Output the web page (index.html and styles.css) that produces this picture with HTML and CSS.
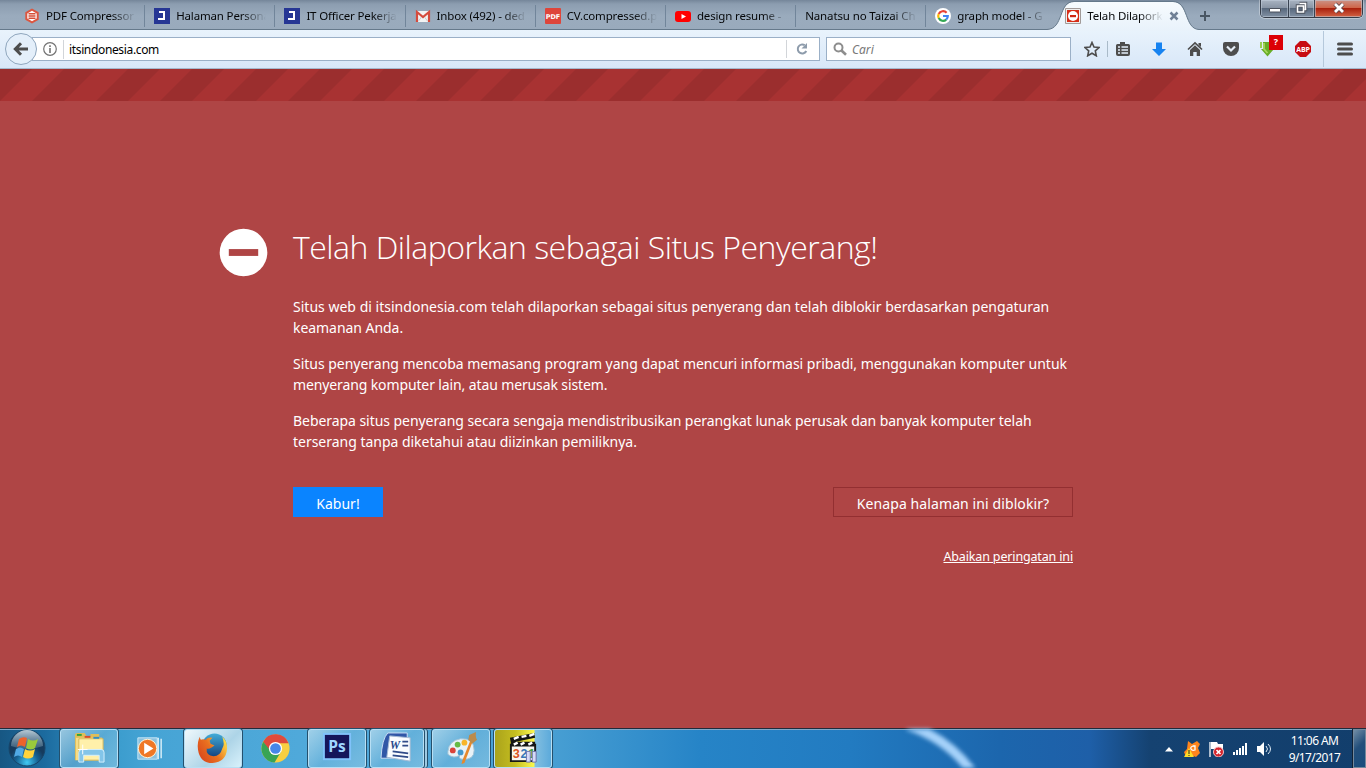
FILE: index.html
```html
<!DOCTYPE html>
<html lang="id">
<head>
<meta charset="utf-8">
<title>Telah Dilaporkan sebagai Situs Penyerang!</title>
<link rel="stylesheet" href="styles.css">
</head>
<body>
<div class="screen">
  <header class="tabstrip">
    <div class="tab"><svg class="fav" viewBox="0 0 16 16"><path d="M8 .5l6.700 3.700v7.600L8 15.500 1.300 11.800V4.200z" fill="#db5640"/><path d="M8 2.800l4.700 2.600v5.200L8 13.200l-4.700-2.600V5.400z" fill="#fff"/><path d="M4.500 5.700h7M4.500 8h7M4.500 10.300h7" stroke="#d64c35" stroke-width="1.500"/></svg><span class="label">PDF Compressor</span></div>
    <div class="tab"><svg class="fav" viewBox="0 0 16 16"><path d="M0 0h16v16H0z" fill="#263694"/><path d="M5 4h5v7H4" fill="none" stroke="#fff" stroke-width="2"/></svg><span class="label">Halaman Persona</span></div>
    <div class="tab"><svg class="fav" viewBox="0 0 16 16"><path d="M0 0h16v16H0z" fill="#263694"/><path d="M5 4h5v7H4" fill="none" stroke="#fff" stroke-width="2"/></svg><span class="label">IT Officer Pekerja</span></div>
    <div class="tab"><svg class="fav" viewBox="0 0 16 16"><path d="M1 3h14v11H1z" fill="#f3f3f3"/><path d="M2 14V4l6 5 6-5v10" fill="none" stroke="#d54b3d" stroke-width="2.200"/><path d="M3.500 13l3-4M12.500 13l-3-4" stroke="#ccc"/></svg><span class="label">Inbox (492) - ded</span></div>
    <div class="tab"><svg class="fav" viewBox="0 0 16 16"><rect width="16" height="16" rx="1" fill="#de453a"/><text x="8" y="10.700" class="pdf" text-anchor="middle">PDF</text></svg><span class="label">CV.compressed.p</span></div>
    <div class="tab"><svg class="fav" viewBox="0 0 16 16"><rect y="3" width="16" height="11" rx="3" fill="#f00"/><path d="M6.500 6v5L11 8.500z" fill="#fff"/></svg><span class="label">design resume - </span></div>
    <div class="tab noicon"><span class="label">Nanatsu no Taizai Ch</span></div>
    <div class="tab last"><svg class="fav" viewBox="0 0 16 16"><circle cx="8" cy="8" r="8" fill="#fff"/><g fill="none" stroke-width="2.200"><path d="M11.600 4.800A4.800 4.800 0 0 0 3.700 5.900" stroke="#ea4335"/><path d="M3.700 5.900a4.800 4.800 0 0 0 0 4.200" stroke="#fbbc05"/><path d="M3.700 10.100a4.800 4.800 0 0 0 7.500 1.500" stroke="#34a853"/><path d="M11.200 11.600A4.800 4.800 0 0 0 12.800 8H8" stroke="#4285f4"/></g></svg><span class="label">graph model - G</span></div>
    <div class="active">
      <svg class="shape" viewBox="0 0 152 31"><defs><linearGradient id="tabg" x2="0" y2="1"><stop stop-color="#f7fbfe"/><stop offset="1" stop-color="#e8f2fb"/></linearGradient></defs><path d="M0 29.500C17 29 11 2 27 2H126C142 2 137 29 152 29.500V31H0z" fill="url(#tabg)"/><path d="M0 29.500C17 29 11 1.500 27 1.500H126C142 1.500 137 29 152 29.500" fill="none" stroke="#65798b"/></svg>
      <svg class="fav" viewBox="0 0 16 16"><path d="M.5.5h15v15H.5z" fill="#eee" stroke="#a29b99"/><path d="M2 2h12v12H2z" fill="#d62d17"/><circle cx="8" cy="8" r="5" fill="#fff"/><path d="M5 7h6v2.200H5z" fill="#ce2712"/></svg><span class="label">Telah Dilapork</span>
      <svg class="close" viewBox="0 0 10 10"><path d="M1.500 1.500l7 7M8.500 1.500l-7 7" stroke="#718196" stroke-width="2.500"/></svg>
    </div>
    <svg class="plus" viewBox="0 0 12 12"><path d="M6 1v10M1 6h10" stroke="#495663" stroke-width="2"/></svg>
    <div class="controls">
      <span class="ctl"><svg viewBox="0 0 28 17"><rect x="8.500" y="8.500" width="11" height="3.500" rx=".5" fill="#fff" stroke="#4b515c"/></svg></span>
      <span class="ctl mid"><svg viewBox="0 0 26 17"><path d="M10.500 3.500h6v6h-1M8.500 6h6v6h-6z" fill="none" stroke="#4b515c" stroke-width="3.500"/><path d="M10.500 3.500h6v6h-1M8.500 6h6v6h-6z" fill="none" stroke="#fff" stroke-width="1.600"/></svg></span>
      <span class="ctl red"><svg viewBox="0 0 47 17"><path d="M20 4l8 8M28 4l-8 8" stroke="#59454a" stroke-width="4.500"/><path d="M20 4l8 8M28 4l-8 8" stroke="#fff" stroke-width="2.800"/></svg></span>
    </div>
  </header>

  <nav class="toolbar">
    <span class="back"><svg viewBox="0 0 16 16"><path d="M15 8H3M8 2.200L2.300 8 8 13.800" fill="none" stroke="#4d4d4d" stroke-width="3"/></svg></span>
    <div class="url">
      <svg class="info" viewBox="0 0 14 14"><circle cx="7" cy="7" r="6.300" fill="none" stroke="#737373" stroke-width="1.200"/><path d="M7 6v5M7 3.200v1.700" stroke="#737373" stroke-width="1.600"/></svg>
      <span class="address">itsindonesia.com</span>
      <span class="reload"><svg viewBox="0 0 14 14"><path d="M9.700 3.200A4.500 4.500 0 1 0 11.300 9" fill="none" stroke="#8d9bab" stroke-width="2"/><path d="M12 1v5.500H6.500z" fill="#8d9bab"/></svg></span>
    </div>
    <div class="search"><svg viewBox="0 0 14 14"><circle cx="5.500" cy="5.500" r="4" fill="none" stroke="#8d8d8d" stroke-width="2"/><path d="M8.500 8.500l4.500 4.200" stroke="#8d8d8d" stroke-width="2.600"/></svg><span>Cari</span></div>
    <div class="tools">
      <svg viewBox="0 0 16 16"><path d="M8 1.500l2 4.500 5 .5-3.700 3.400 1 4.900L8 12.300l-4.300 2.500 1-4.900L1 6.500 6 6z" fill="none" stroke="#4d4d4d" stroke-width="1.600"/></svg>
      <svg class="list" viewBox="0 0 16 16"><path d="M5 3V1h5v2h3.500a1.500 1.500 0 0 1 1.500 1.500v8.500a2 2 0 0 1-2 2H3a2 2 0 0 1-2-2V4.500A1.500 1.500 0 0 1 2.500 3z" fill="#4d4d4d"/><path d="M3 6h2M6.500 6H13M3 9h2M6.500 9H13M3 12h2M6.500 12H13" stroke="#e4eefa" stroke-width="1.300"/></svg>
      <svg viewBox="0 0 16 16"><path d="M5 1.500h6V8h4L8 15 1 8h4z" fill="#1783f0"/></svg>
      <svg viewBox="0 0 16 16"><path d="M1 8.500l7-6.500 7 6.500" fill="none" stroke="#4d4d4d" stroke-width="1.700"/><path d="M11.500 2H14v4l-2.500-2zM3 9l5-4.700L13 9v6H9.700v-4H6.300v4H3z" fill="#4d4d4d"/></svg>
      <svg viewBox="0 0 16 16"><path d="M2 1h12a2 2 0 0 1 2 2v4A8 8 0 0 1 0 7V3a2 2 0 0 1 2-2z" fill="#4d4d4d"/><path d="M4 5.500l4 4 4-4" fill="none" stroke="#e5eef8" stroke-width="2.200"/></svg>
      <span class="fetch"><svg viewBox="0 0 16 16"><path d="M4 1h8v7h3l-6.500 7.500L2 8h2z" fill="#69ad27"/><path d="M1 1h2v6H1z" fill="#99cf52"/><path d="M5 2v6l3.500 4" stroke="#a8d85d" stroke-width="1.800" fill="none"/></svg><b>?</b></span>
      <svg viewBox="0 0 16 16"><path d="M5 0h6l5 5v6l-5 5H5l-5-5V5z" fill="#c70d12"/><text x="8" y="10.700" class="abp" text-anchor="middle">ABP</text></svg>
    </div>
    <span class="menu"><svg viewBox="0 0 16 14"><path d="M1.500 2h13M1.500 7h13M1.500 12h13" stroke="#4d4d4d" stroke-width="3" stroke-linecap="round"/></svg></span>
  </nav>

  <svg class="stripes" width="1366" height="32"><defs><pattern id="stripe" width="64" height="32" patternUnits="userSpaceOnUse"><path d="M0 0h64v32H0z" fill="#a83232"/><path d="M0 0h32L0 32zM64 0v32H32z" fill="#9b2e2e"/></pattern></defs><rect width="1366" height="32" fill="url(#stripe)"/></svg>

  <main class="warning">
    <svg class="stop" viewBox="0 0 50 50"><circle cx="25" cy="25" r="24.300" fill="#fff"/><path d="M10 21.500h30v7H10z" fill="#af4545"/></svg>
    <section class="content">
      <h1>Telah Dilaporkan sebagai Situs Penyerang!</h1>
      <p><span class="p1">Situs web di itsindonesia.com telah dilaporkan sebagai situs penyerang dan telah diblokir berdasarkan pengaturan</span><br><span class="p2">keamanan Anda.</span></p>
      <p><span class="p3">Situs penyerang mencoba memasang program yang dapat mencuri informasi pribadi, menggunakan komputer untuk</span><br><span class="p4">menyerang komputer lain, atau merusak sistem.</span></p>
      <p><span class="p5">Beberapa situs penyerang secara sengaja mendistribusikan perangkat lunak perusak dan banyak komputer telah</span><br><span class="p6">terserang tanpa diketahui atau diizinkan pemiliknya.</span></p>
      <div class="actions"><button class="leave">Kabur!</button><button class="why">Kenapa halaman ini diblokir?</button></div>
      <div class="ignore"><a>Abaikan peringatan ini</a></div>
    </section>
  </main>

  <footer class="taskbar">
    <svg class="streak" viewBox="0 0 110 40"><path d="M0-4Q42 10 67 45" fill="none" stroke="#a6d2fa" stroke-width="10"/></svg>
    <svg class="start" viewBox="0 0 40 40"><defs><radialGradient id="orb" cy=".9"><stop stop-color="#41caf4"/><stop offset=".6" stop-color="#176496"/><stop offset="1" stop-color="#163b5d"/></radialGradient><linearGradient id="shine" x2="0" y2="1"><stop stop-color="#d4e2e9" stop-opacity=".85"/><stop offset="1" stop-color="#8aaabc" stop-opacity=".3"/></linearGradient></defs><circle cx="20" cy="20" r="18" fill="url(#orb)" stroke="#174569"/><path d="M4 18a16 16 0 0 1 32 0q-16 6-32 0z" fill="url(#shine)"/><path d="M12 11q4-3 8-1l-2 9q-4-3-8 0z" fill="#ee622b"/><path d="M21 11q5 3 10 0l-3 9q-4 3-9 0z" fill="#9aca3c"/><path d="M9 21q4-3 8 0l-2 8q-4-3-8 0z" fill="#51a9e5"/><path d="M18 21q5 3 10 0l-2 8q-5 3-10 0z" fill="#ffd33c"/></svg>
    <div class="apps">
      <span class="app open"><svg viewBox="0 0 36 34"><path d="M3 3q0-2 2-2h8l2 3h4V2h9v4h3v23H3z" fill="#dfbd58"/><path d="M4 6h27v23H4z" fill="#f6dc86"/><path d="M7 7h25v22H7z" fill="#fff0aa" stroke="#d6b75b"/><path d="M5 2h5v2H5z" fill="#30a335"/><path d="M13 4h6v2h-6z" fill="#d84b2d"/><path d="M22 5h6v2h-6z" fill="#328dc5"/><path d="M7 31V21q0-3 3-3h20q3 0 3 3v10h-5v-7H12v7z" fill="#83c5e9" stroke="#d5f0fd"/><path d="M11 13v10M6 18h10" stroke="#fff"/></svg></span>
      <span class="app player"><svg viewBox="0 0 36 34"><path d="M6 6h20v22H6z" fill="#8bc1df" stroke="#c7e7f8"/><path d="M27 6v22M30 7v20" fill="none" stroke="#d8eef8" stroke-width="1.500"/><circle cx="16" cy="17" r="9.500" fill="#ef7725" stroke="#fff5d9"/><path d="M12.500 11v12l9.500-6z" fill="#fff"/></svg></span>
      <span class="app open bright"><svg viewBox="0 0 36 34"><defs><linearGradient id="fox" x1="0" x2="1" y1=".8" y2=".2"><stop stop-color="#d8431b"/><stop offset=".5" stop-color="#e97120"/><stop offset="1" stop-color="#ffe24a"/></linearGradient><linearGradient id="globe" x2="0" y2="1"><stop stop-color="#43acd8"/><stop offset="1" stop-color="#123f7d"/></linearGradient></defs><circle cx="19" cy="14" r="12.500" fill="url(#globe)"/><path d="M4 5Q1 10 2 18q2 14 15 14 14-1 15-15 0-8-5-12 3 8 0 12-2 8-9 8-8-1-7-8 2 1 5-1l3-2-4-2-1-3 3-3q-5-1-7 2-3-1-5 0-1-1-1-3z" fill="url(#fox)"/></svg></span>
      <span class="app"><svg viewBox="0 0 36 34"><circle cx="18" cy="17" r="14.500" fill="#f8cf42"/><path d="M5.300 10A14.500 14.500 0 0 1 31.500 11.500H18L12 20z" fill="#de4a3d"/><path d="M5.300 10A14.500 14.500 0 0 0 17 31.500l6.500-11-10-.5z" fill="#38a455"/><circle cx="18" cy="17" r="6.800" fill="#fff"/><circle cx="18" cy="17" r="5.500" fill="#4687e9"/></svg></span>
      <span class="app open"><svg viewBox="0 0 36 34"><path d="M3 1h29v28H3z" fill="#80c2fa"/><path d="M5 3h25v24H5z" fill="#15165b"/><text x="17.500" y="20.500" class="ps" text-anchor="middle">Ps</text></svg></span>
      <span class="app open stack"><svg viewBox="0 0 36 34"><path d="M8 1h20v26H1Q2 7 8 1z" fill="#3057a7" stroke="#cbe0f5"/><path d="M10 4l21 2v24L7 26z" fill="#f9fcff" stroke="#a7bcd4"/><text x="10" y="18" class="word">W</text><path d="M23 10h6M23 14h6M13 20l16 2M13 24l16 2" stroke="#304b89" stroke-width="1.800"/></svg></span>
      <span class="app open"><svg viewBox="0 0 36 34"><path d="M4 20Q5 9 17 7q14-1 14 12 0 10-12 9-4 0-3-4-6 4-12-1z" fill="#e8f2f7" stroke="#a3c3d6"/><circle cx="9" cy="19" r="3" fill="#da433b"/><circle cx="14" cy="13" r="3" fill="#66ba45"/><circle cx="21" cy="11" r="3" fill="#f8b529"/><circle cx="17" cy="21" r="3" fill="#4399cd"/><path d="M27 9l2 2-8 21-3 1 1-4z" fill="#e7892c"/><path d="M26 3l7-3q-1 5 1 8l-5 4-4-4z" fill="#bb8b4c"/></svg></span>
      <span class="app open yellow"><svg viewBox="0 0 36 34"><path d="M5 13h25v17H5z" fill="#f6f6f0" stroke="#171915" stroke-width="2"/><path d="M4 6L29 1l1 5L5 11zM5 10h25v5H5z" fill="#141615"/><path d="M8 7l5-2M16 5l5-1M24 4l5-2M8 13l4-2M15 13l4-2M23 13l4-2" stroke="#fff" stroke-width="2.500"/><text x="7" y="27" class="mpc" fill="#da5422">3</text><text x="15" y="27" class="mpc" fill="#3778b9">2</text><text x="23" y="27" class="mpc" fill="#42a143">1</text><path d="M21 20h4v11h-4zM27 20h4v11h-4z" fill="#d5daf7" stroke="#6c73ad"/></svg></span>
    </div>
    <div class="tray">
      <svg class="up" viewBox="0 0 10 8"><path d="M1 6.500h8L5 2z" fill="#fff"/></svg>
      <svg viewBox="0 0 16 16"><path d="M4 0l4 3 5-3 3 3-2 4 2 5-4 4-5-2-5 2-2-5 3-3z" fill="#ff851c"/><path d="M9 5q-3 1-2 3t4 1V5z" fill="none" stroke="#fff" stroke-width="1.300"/><path d="M5 7l5 9H0z" fill="#fddd28"/><path d="M5 9v4M5 14v1" stroke="#222"/></svg>
      <svg viewBox="0 0 16 16"><path d="M2 1v15" stroke="#fff" stroke-width="1.300"/><path d="M3 1h6l1 2h5v7H9L8 8H3z" fill="#fff"/><circle cx="10.500" cy="11" r="5" fill="#d6242c" stroke="#f5c4c7"/><path d="M8.500 9l4 4M12.500 9l-4 4" stroke="#fff" stroke-width="1.700"/></svg>
      <svg viewBox="0 0 16 16"><path d="M2 11v3M5 9v5M8 7v7M11 5v9M14 2v12" stroke="#fff" stroke-width="2"/></svg>
      <svg viewBox="0 0 16 16"><path d="M1 5h3l4-4v14l-4-4H1z" fill="#fff"/><path d="M10 5q3 3 0 6M12 3q5 5 0 10" fill="none" stroke="#e1edf7"/></svg>
    </div>
    <div class="clock"><span>11:06 AM</span><span>9/17/2017</span></div>
    <div class="desktop"></div>
  </footer>
</div>
</body>
</html>
```

FILE: styles.css
```css
* { box-sizing: border-box; }
body { margin: 0; overflow: hidden; font-family: "Noto Sans", "Open Sans", sans-serif; }
svg { display: block; flex: none; }
.screen { width: 1366px; height: 768px; display: flex; flex-direction: column; }
.tabstrip { height: 30px; padding-left: 15px; display: flex; position: relative; background: linear-gradient(#75869a, #8c9db0 4px, #9aabbd 16px, #99aabc); border-bottom: 1px solid #65798b; font-size: 11.5px; }
.tab { width: 130.200px; height: 29px; padding: 2px 9px 0 9px; display: flex; align-items: center; gap: 6px; position: relative; flex: none; }
.tab::after { content: ""; position: absolute; right: 0; top: 5px; width: 1px; height: 22px; background: #71859a; }
.tab.last { width: 130px; padding-right: 10px; }
.tab.last::after { display: none; }
.fav { width: 16px; height: 16px; }
.label { flex: 1; min-width: 0; overflow: hidden; white-space: nowrap; line-height: 20px; letter-spacing: -.16px; color: #050709; mask-image: linear-gradient(to right, #000 calc(100% - 24px), transparent); }
.noicon .label { letter-spacing: -.12px; }
.active { width: 152px; height: 30px; display: flex; align-items: center; gap: 6px; padding: 2px 20px 0 18px; position: relative; margin-left: -9px; flex: none; }
.active .shape { position: absolute; left: 0; top: 0; width: 152px; height: 31px; }
.active .fav, .active .label, .active .close { position: relative; }
.close { width: 10px; height: 10px; }
.plus { width: 12px; height: 12px; margin: 10px 0 0 0; }
.controls { margin-left: auto; margin-right: 3px; height: 18px; display: flex; border: 1px solid #343c48; border-top: 0; border-radius: 0 0 5px 5px; overflow: hidden; box-shadow: 0 0 0 1px #ffffff55; }
.ctl { width: 28px; background: linear-gradient(#a9b4c2, #8793a3 48%, #58687c 50%, #8190a3); border-right: 1px solid #394351; box-shadow: inset 0 0 0 1px #c3cfdb88; }
.ctl.mid { width: 26px; }
.ctl.red { width: 47px; border: 0; background: linear-gradient(#cb9387, #cf6246 48%, #aa210d 50%, #d36445); }
.ctl svg { height: 17px; }
.toolbar { height: 39px; display: flex; align-items: center; padding-left: 5px; background: linear-gradient(#e9f3fc, #d8e7f8); border-bottom: 1px solid #a5b8cc; }
.back { width: 32px; height: 32px; border: 1px solid #8fa6bd; border-radius: 50%; background: #e4effa; display: grid; place-items: center; position: relative; z-index: 1; }
.back svg { width: 16px; height: 16px; }
.url { margin-left: -5px; width: 788px; height: 24px; border: 1px solid #9bb0c7; background: #fff; display: flex; align-items: center; }
.info { width: 14px; height: 14px; margin-left: 10px; }
.address { margin-left: 6px; border-left: 1px solid #d2d5d9; padding: 1px 0 0 5px; font-size: 12px; line-height: 18px; letter-spacing: -.35px; color: #000; }
.reload { margin-left: auto; width: 33px; height: 18px; border-left: 1px solid #d2d5d9; padding: 2px 0 0 8px; }
.reload svg { width: 14px; height: 14px; }
.search { margin-left: 6px; width: 245px; height: 24px; border: 1px solid #9bb0c7; background: #fff; display: flex; align-items: center; gap: 5px; padding-left: 6px; font-size: 12px; font-style: italic; color: #777; }
.search svg { width: 14px; height: 14px; }
.search span { padding-top: 1px; }
.tools { display: flex; align-items: center; margin-left: 13px; gap: 20px; }
.tools svg { width: 16px; height: 16px; }
.tools .list { width: 24px; height: 16px; border-left: 1px solid #a9bac9; padding-left: 7px; margin-left: -10px; }
.tools > svg:first-child { margin-right: -3px; }
.fetch { position: relative; }
.fetch b { position: absolute; left: 10px; top: -6px; width: 14px; height: 15px; background: #dc0006; color: #fff; font: bold 9px/14px "Open Sans", sans-serif; text-align: center; }
.menu { margin-left: 12px; border-left: 1px solid #b5c8db; height: 36px; padding: 11px 0 0 13px; }
.menu svg { width: 16px; height: 14px; }
.stripes { height: 32px; }
.warning { height: 627px; background: #af4545; display: flex; padding: 127px 0 0 219px; color: #fff; }
.stop { width: 49px; height: 49px; }
.content { width: 780px; margin-left: 25px; font-size: 14px; white-space: nowrap; }
h1 { margin: -4px 0 0; font: 300 32px/46px "Open Sans", sans-serif; letter-spacing: -.5px; }
p { margin: 0 0 15px; line-height: 21px; letter-spacing: -.12px; }
h1 + p { margin-top: 26px; }
.p1 { letter-spacing: .015px; }
.p2 { letter-spacing: -.05px; }
.p3 { letter-spacing: -.02px; }
.p5 { letter-spacing: -.055px; }
.p6 { letter-spacing: -.02px; }
.actions { display: flex; justify-content: space-between; margin-top: 35px; }
button { height: 30px; border: 0; font: 14px/20px "Noto Sans", sans-serif; color: #fff; padding: 3px 0 0; white-space: nowrap; }
.leave { width: 90px; background: #0a84ff; letter-spacing: 0; }
.why { width: 240px; background: transparent; border: 1px solid #932f31; letter-spacing: .1px; }
.ignore { margin-top: 31px; text-align: right; font-size: 12.500px; line-height: 18px; letter-spacing: -.15px; }
.ignore a { text-decoration: underline; }
.taskbar { height: 40px; border-top: 1px solid #202b3c; box-shadow: inset 0 1px #80a8c7; position: relative; display: flex; background: linear-gradient(90deg, #175783 0, #1c6b9f 45px, #399bcc 110px, #46a4d5 150px, #51aadb 330px, #489fd3 550px, #2684c7 700px, #227bc1 850px, #1c66ad 1000px, #1e5fa8 1090px, #154271 1150px, #123e6c 1366px); }
.streak { position: absolute; left: 906px; top: 0; width: 110px; height: 39px; filter: blur(2px); }
.start { width: 40px; height: 40px; margin: -1px 13px 0 7px; position: relative; }
.apps { display: flex; gap: 4px; position: relative; }
.app { width: 58px; height: 39px; display: flex; justify-content: center; padding-top: 3px; border-radius: 3px; }
.app svg { width: 35px; height: 33px; }
.app.player svg { margin-left: -3px; }
.app.open { border: 1px solid #b7dff4; box-shadow: 0 0 0 1px #24506d; background: linear-gradient(135deg, #b3d9eccc, #70b6dc99 50%, #91c9e599); padding-top: 2px; }
.app.bright { background: linear-gradient(135deg, #eff8fc, #add4e7 60%, #d8f1fb); }
.app.stack { width: 54px; margin-right: 4px; box-shadow: 0 0 0 1px #24506d, 3px 0 0 #9fcbe3, 4px 0 0 #24506d; }
.app.yellow { background: linear-gradient(90deg, #aaa31b, #c4bd20 20px, #fbf74e 39px, #83bfe0 40px, #5caadb); }
.tray { margin-left: auto; display: flex; align-items: center; gap: 8px; }
.tray svg { width: 16px; height: 16px; }
.tray .up { width: 10px; height: 8px; margin-right: 2px; }
.clock { width: 86px; display: flex; flex-direction: column; align-items: center; font-size: 12px; line-height: 17px; letter-spacing: -.6px; color: #fff; padding: 3px 1px 0 0; }
.desktop { width: 13px; margin-left: -5px; border: 1px solid #74899c; box-shadow: -1px 0 #102236; background: linear-gradient(135deg, #718da5, #234f7b 45%, #184c7d); }
.pdf { font: bold 6.500px "DejaVu Sans", sans-serif; fill: #fff; }
.abp { font: bold 7px "Open Sans", sans-serif; letter-spacing: -.2px; fill: #fff; }
.ps { font: bold 16px "Open Sans", sans-serif; fill: #a0d6ff; }
.word { font: italic bold 12px "Liberation Serif", serif; fill: #26498c; }
.mpc { font: bold 13px "Liberation Sans", sans-serif; }
```
